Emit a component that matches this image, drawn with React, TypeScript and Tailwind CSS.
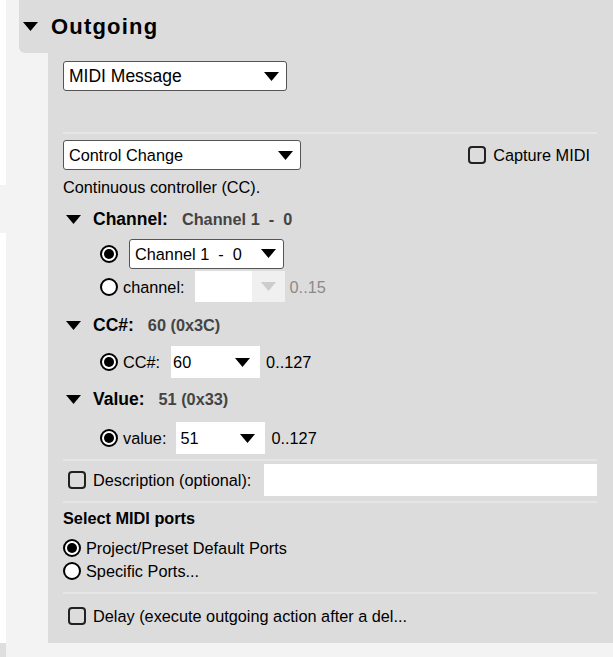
import React from 'react';

function Tri({ className = '' }: { className?: string }) {
  return (
    <svg width="15" height="9" viewBox="0 0 15 9" className={className}>
      <path d="M0 0 L15 0 L7.5 9 Z" fill="currentColor" />
    </svg>
  );
}

function Radio({ on }: { on?: boolean }) {
  return (
    <span className="flex h-[18px] w-[18px] shrink-0 items-center justify-center rounded-full border-2 border-black bg-white">
      {on && <span className="h-[10px] w-[10px] rounded-full bg-black" />}
    </span>
  );
}

function Check() {
  return <span className="block h-[18px] w-[18px] shrink-0 rounded-[4px] border-2 border-[#222]" />;
}

function Select({ label, w, big }: { label: string; w: string; big?: boolean }) {
  return (
    <div className={`flex h-[30px] ${w} items-center justify-between rounded-[3px] border border-[#555] bg-white pl-[5px] pr-[7px] ${big ? 'text-[17.5px]' : ''}`}>
      <span className="whitespace-pre">{label}</span>
      <Tri />
    </div>
  );
}

function Sep() {
  return <div className="h-[2px] bg-[#e6e6e6]" />;
}

function Section({ title, value }: { title: string; value: string }) {
  return (
    <div className="flex h-[22px] items-center pl-[3px]">
      <Tri />
      <span className="ml-[12px] text-[17.5px] font-bold">{title}</span>
      <span className="ml-[14px] whitespace-pre text-[16.3px] font-bold text-[#444]">{value}</span>
    </div>
  );
}

export default function App() {
  return (
    <div className="flex h-[657px] w-[613px] overflow-hidden bg-[#f3f3f3] font-['Liberation_Sans',Arial,sans-serif] text-[16.3px] leading-[20px] text-black">
      <div className="flex w-[6px] flex-col">
        <div className="h-[185px] bg-white" />
        <div className="h-[48px]" />
        <div className="h-[410px] bg-white" />
        <div className="flex-1 bg-[#dedede]" />
      </div>
      <div className="flex flex-1 flex-col pl-[13px]">
        <div className="flex h-[53px] items-center rounded-bl-[6px] bg-[#dcdcdc] pl-[4px]">
          <Tri />
          <span className="ml-[13px] text-[22px] font-bold tracking-[1.2px]">Outgoing</span>
        </div>
        <div className="flex pl-[29px]">
          <div className="flex h-[590px] flex-1 flex-col bg-[#dcdcdc] pl-[15px] pr-[16px]">
            <div className="mt-[8px]">
              <Select label="MIDI Message" w="w-[224px]" big />
            </div>
            <div className="mt-[41px]"><Sep /></div>
            <div className="mt-[6px] flex items-center justify-between">
              <Select label="Control Change" w="w-[238px]" />
              <div className="flex items-center gap-[7px] pr-[7px]">
                <Check />
                <span>Capture MIDI</span>
              </div>
            </div>
            <div className="mt-[6px] flex h-[22px] items-center">Continuous controller (CC).</div>

            <div className="mt-[10px]"><Section title="Channel:" value="Channel 1  -  0" /></div>
            <div className="mt-[8px] flex h-[31px] items-center pl-[37px]">
              <Radio on />
              <div className="ml-[11px]">
                <Select label="Channel 1  -  0" w="w-[155px]" />
              </div>
            </div>
            <div className="mt-[2px] flex h-[31px] items-center pl-[37px]">
              <Radio />
              <span className="ml-[5px]">channel:</span>
              <div className="ml-[10px] flex h-[31px] w-[90px]">
                <div className="w-[57px] bg-white" />
                <div className="flex flex-1 items-center justify-center bg-[#f0f0f0] text-[#cccccc]"><Tri /></div>
              </div>
              <span className="ml-[5px] text-[#8a8a8a]">0..15</span>
            </div>

            <div className="mt-[12px]"><Section title="CC#:" value="60 (0x3C)" /></div>
            <div className="mt-[10px] flex h-[32px] items-center pl-[37px]">
              <Radio on />
              <span className="ml-[5px]">CC#:</span>
              <div className="ml-[11px] flex h-[32px] w-[89px] items-center justify-between bg-white pl-[2px] pr-[10px]">
                <span>60</span>
                <Tri />
              </div>
              <span className="ml-[6px]">0..127</span>
            </div>

            <div className="mt-[10px]"><Section title="Value:" value="51 (0x33)" /></div>
            <div className="mt-[12px] flex h-[32px] items-center pl-[37px]">
              <Radio on />
              <span className="ml-[5px]">value:</span>
              <div className="ml-[10px] flex h-[32px] w-[89px] items-center justify-between bg-white pl-[4px] pr-[10px]">
                <span>51</span>
                <Tri />
              </div>
              <span className="ml-[6px]">0..127</span>
            </div>

            <div className="mt-[5px]"><Sep /></div>
            <div className="mt-[3px] flex h-[32px] items-center">
              <div className="ml-[5px]"><Check /></div>
              <span className="ml-[7px]">Description (optional):</span>
              <div className="ml-[13px] h-[32px] flex-1 bg-white" />
            </div>
            <div className="mt-[5px]"><Sep /></div>
            <div className="mt-[4px] flex h-[22px] items-center text-[16.3px] font-bold">Select MIDI ports</div>
            <div className="mt-[9px] flex h-[20px] items-center gap-[5px]">
              <Radio on />
              <span>Project/Preset Default Ports</span>
            </div>
            <div className="mt-[3px] flex h-[20px] items-center gap-[5px]">
              <Radio />
              <span>Specific Ports...</span>
            </div>
            <div className="mt-[11px]"><Sep /></div>
            <div className="mt-[12px] flex h-[20px] items-center">
              <div className="ml-[5px]"><Check /></div>
              <span className="ml-[7px]">Delay (execute outgoing action after a del...</span>
            </div>
          </div>
        </div>
      </div>
    </div>
  );
}
